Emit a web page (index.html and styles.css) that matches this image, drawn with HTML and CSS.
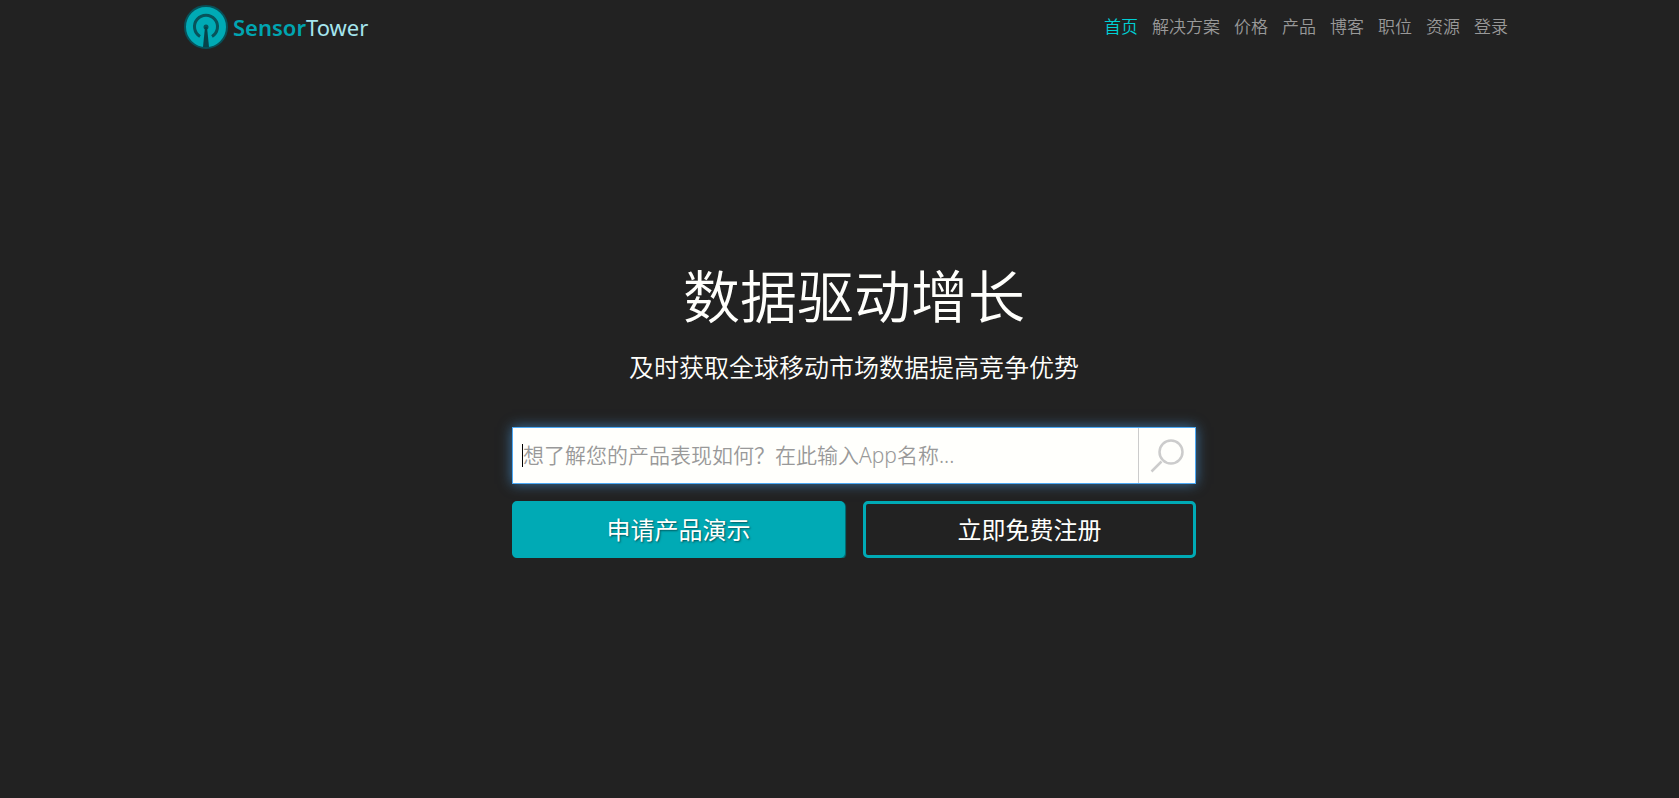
FILE: index.html
```html
<!DOCTYPE html>
<html lang="zh-CN">
    <head>
        <meta charset="UTF-8" />
        <meta name="viewport" content="width=device-width, initial-scale=1.0" />
        <title>SensorTower</title>
        <link rel="stylesheet" href="styles.css">
    </head>
    <body>
        <header class="header">
            <a class="logo" href="#">
                <svg class="logo-icon" viewBox="0 0 44 44" aria-hidden="true">
                    <circle cx="22" cy="22" r="21" fill="#00aab5" stroke="#075159" stroke-width="2" />
                    <path d="M16 31.5A11.5 11.5 0 1 1 28 31.5" fill="none" stroke="#07535b" stroke-width="3" />
                    <circle cx="22" cy="22" r="2.5" fill="#07535b" />
                    <path d="M21 22h2l2 20h-6z" fill="#07434a" />
                </svg>
                <span class="logo-text"><b>Sensor</b>Tower</span>
            </a>
            <nav class="nav">
                <a class="active" href="#">首页</a>
                <a href="#">解决方案</a>
                <a href="#">价格</a>
                <a href="#">产品</a>
                <a href="#">博客</a>
                <a href="#">职位</a>
                <a href="#">资源</a>
                <a href="#">登录</a>
            </nav>
        </header>
        <main class="main">
            <div class="hero">
                <h1>数据驱动增长</h1>
                <p>及时获取全球移动市场数据提高竞争优势</p>
                <form class="search">
                    <span class="caret"></span>
                    <input type="text" aria-label="App名称" placeholder="想了解您的产品表现如何？在此输入App名称..." />
                    <button type="button" aria-label="搜索">
                        <svg viewBox="0 0 36 36" aria-hidden="true">
                            <circle cx="22" cy="14" r="11.5" />
                            <path d="M12.5 23.5L2.5 33.5" />
                        </svg>
                    </button>
                </form>
                <div class="actions">
                    <button class="btn btn-fill" type="button">申请产品演示</button>
                    <button class="btn" type="button">立即免费注册</button>
                </div>
            </div>
        </main>
    </body>
</html>
```

FILE: styles.css
```css
* {
    margin: 0;
    padding: 0;
    box-sizing: border-box;
}

body {
    background-color: #222222;
    color: #fffffc;
    font-family: "Noto Sans CJK SC", sans-serif;
}

a {
    text-decoration: none;
}

.header {
    display: flex;
    justify-content: space-between;
    align-items: center;
    padding: 5px 171px 5px 184px;
}

.logo {
    display: flex;
    align-items: center;
    gap: 5px;
}

.logo-icon {
    width: 44px;
    height: 44px;
}

.logo-text {
    color: #a5e5ee;
    font-family: "Noto Sans", sans-serif;
    font-size: 22px;
    line-height: 32px;
}

.logo-text b {
    color: #00a5b1;
    font-weight: 600;
}

.nav {
    display: flex;
    gap: 14px;
    padding-bottom: 2px;
}

.nav a {
    color: #999999;
    font-size: 17px;
    font-weight: 350;
    line-height: 24px;
}

.nav .active {
    color: #00cfd4;
}

.main {
    padding: 199px 0 0 29px;
}

.hero {
    max-width: 684px;
    margin: 0 auto;
    text-align: center;
}

.hero h1 {
    font-size: 57px;
    font-weight: 350;
    line-height: 80px;
}

.hero p {
    margin-top: 15px;
    font-size: 25px;
    font-weight: 350;
    line-height: 36px;
}

.search {
    display: flex;
    align-items: center;
    height: 57px;
    margin-top: 43px;
    padding-left: 9px;
    background-color: #fffffc;
    border: 1px solid #4ca9f5;
    box-shadow: 0 0 12px rgba(76, 169, 245, 0.6);
}

.caret {
    width: 1px;
    height: 23px;
    background-color: #000000;
}

.search input {
    flex: 1;
    min-width: 0;
    height: 100%;
    padding-bottom: 2px;
    border: 0;
    outline: 0;
    background: transparent;
    color: #222222;
    font-family: "Noto Sans", "Noto Sans CJK SC", sans-serif;
    font-size: 21px;
    font-weight: 350;
}

.search input::placeholder {
    color: #999999;
}

.search button {
    display: flex;
    justify-content: center;
    align-items: center;
    width: 57px;
    height: 100%;
    border: 0;
    border-left: 1px solid #cccccc;
    background: transparent;
    cursor: pointer;
}

.search svg {
    width: 36px;
    height: 36px;
    fill: none;
    stroke: #cccccc;
    stroke-width: 2.5;
}

.actions {
    display: grid;
    grid-template-columns: 1fr 1fr;
    gap: 18px;
    margin-top: 17px;
}

.btn {
    height: 57px;
    padding-bottom: 2px;
    border: 3px solid #00aab5;
    border-radius: 5px;
    background-color: transparent;
    color: #fffffc;
    font-family: "Noto Sans CJK SC", sans-serif;
    font-size: 24px;
    cursor: pointer;
}

.btn-fill {
    background-color: #00aab5;
    box-shadow: 1px 1px 1px #00737b;
    text-shadow: 1px 1px 2px rgba(0, 0, 0, 0.5);
}
```
